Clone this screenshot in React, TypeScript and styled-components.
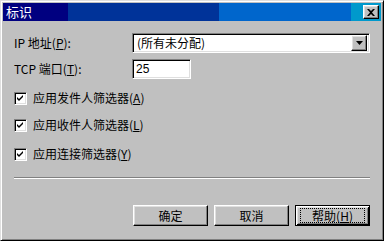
import React from 'react';
import styled, { createGlobalStyle, css } from 'styled-components';

const Global = createGlobalStyle`
  html, body {
    margin: 0;
    padding: 0;
    background: #c0c0c0;
  }
  body {
    font-family: "Noto Sans CJK SC", "DejaVu Sans", sans-serif;
    font-size: 12px;
    line-height: 14px;
    color: #000;
  }
`;

const raised = css`
  border-style: solid;
  border-width: 1px;
  border-color: #fff #000 #000 #fff;
  box-shadow: inset -1px -1px 0 #808080, inset 1px 1px 0 #dfdfdf;
`;

const sunken = css`
  border-style: solid;
  border-width: 1px;
  border-color: #808080 #fff #fff #808080;
  box-shadow: inset 1px 1px 0 #000, inset -1px -1px 0 #dfdfdf;
`;

const Window = styled.div`
  box-sizing: border-box;
  width: 384px;
  height: 241px;
  padding: 2px;
  background: #c0c0c0;
  border-style: solid;
  border-width: 1px;
  border-color: #dfdfdf #000 #000 #dfdfdf;
  box-shadow: inset 1px 1px 0 #fff, inset -1px -1px 0 #808080;
  display: flex;
  flex-direction: column;
  overflow: hidden;
`;

const TitleBar = styled.div`
  flex: none;
  height: 18px;
  display: flex;
  align-items: center;
  justify-content: space-between;
  padding: 0 2px 0 3px;
  background: linear-gradient(
    to right,
    #000080 0,
    #000080 65px,
    #003399 65px,
    #003399 216px,
    #0066cc 216px,
    #0066cc 348px,
    #0099cc 348px
  );
`;

const Title = styled.span`
  color: #fff;
  font-size: 13px;
  line-height: 16px;
`;

const CloseButton = styled.div`
  ${raised};
  box-sizing: border-box;
  width: 16px;
  height: 14px;
  background: #c0c0c0;
  display: flex;
  align-items: center;
  justify-content: center;
`;

const Body = styled.div`
  flex: 1;
  display: flex;
  flex-direction: column;
  padding: 12px 11px 0 11px;
`;

const FieldRow = styled.div<{ $gap: number }>`
  flex: none;
  height: 20px;
  display: flex;
  align-items: center;
  margin-bottom: ${p => p.$gap}px;
`;

const FieldLabel = styled.label`
  width: 118px;
  white-space: nowrap;
`;

const Combo = styled.div`
  ${sunken};
  box-sizing: border-box;
  width: 238px;
  height: 20px;
  background: #fff;
  display: flex;
  align-items: center;
  justify-content: space-between;
  padding: 0 2px 0 4px;
`;

const DropButton = styled.div`
  ${raised};
  box-sizing: border-box;
  width: 16px;
  height: 16px;
  background: #c0c0c0;
  display: flex;
  align-items: center;
  justify-content: center;
`;

const TextInput = styled.div`
  ${sunken};
  box-sizing: border-box;
  width: 59px;
  height: 20px;
  background: #fff;
  display: flex;
  align-items: center;
  padding-left: 3px;
  font-family: "Liberation Sans", sans-serif;
  font-size: 12px;
`;

const CheckRow = styled.label<{ $top: number }>`
  flex: none;
  height: 14px;
  display: flex;
  align-items: center;
  gap: 6px;
  margin-top: ${p => p.$top}px;
  white-space: nowrap;
`;

const Box = styled.span`
  ${sunken};
  box-sizing: border-box;
  width: 13px;
  height: 13px;
  background: #fff;
  display: flex;
  align-items: center;
  justify-content: center;
`;

const Separator = styled.div`
  flex: none;
  height: 0;
  border-top: 1px solid #808080;
  border-bottom: 1px solid #fff;
  margin: 16px 0 0 0;
`;

const ButtonRow = styled.div`
  flex: none;
  display: flex;
  justify-content: flex-end;
  gap: 6px;
  margin-top: 26px;
`;

const Button = styled.div<{ $default?: boolean }>`
  box-sizing: border-box;
  width: 75px;
  height: 21px;
  background: #c0c0c0;
  display: flex;
  align-items: center;
  justify-content: center;
  ${raised};
  ${p =>
    p.$default &&
    css`
      border: 1px solid #000;
      box-shadow: inset 1px 1px 0 #fff, inset -1px -1px 0 #000,
        inset 2px 2px 0 #dfdfdf, inset -2px -2px 0 #808080;
    `}
`;

const Focus = styled.span`
  box-sizing: border-box;
  width: 65px;
  height: 15px;
  border: 1px dotted #000;
  display: flex;
  align-items: center;
  justify-content: center;
`;

const Key = styled.span`
  text-decoration: underline;
`;

const Accel = ({ k }: { k: string }) => (
  <span>
    (<Key>{k}</Key>)
  </span>
);

const Check = () => (
  <Box>
    <svg width="7" height="7" viewBox="0 0 7 7">
      <path d="M0 2 L2 4 L6 0 L6 2 L2 6 L0 4 Z" fill="#000" />
    </svg>
  </Box>
);

export default function App() {
  return (
    <>
      <Global />
      <Window>
        <TitleBar>
          <Title>标识</Title>
          <CloseButton>
            <svg width="8" height="7" viewBox="0 0 8 7">
              <path
                d="M0 0h2l2 2 2-2h2L5 3.5 8 7H6L4 5 2 7H0l3-3.5z"
                fill="#000"
              />
            </svg>
          </CloseButton>
        </TitleBar>
        <Body>
          <FieldRow $gap={6}>
            <FieldLabel>
              IP 地址<Accel k="P" />:
            </FieldLabel>
            <Combo>
              <span>(所有未分配)</span>
              <DropButton>
                <svg width="7" height="4" viewBox="0 0 7 4">
                  <path d="M0 0h7L3.5 4z" fill="#000" />
                </svg>
              </DropButton>
            </Combo>
          </FieldRow>
          <FieldRow $gap={0}>
            <FieldLabel>
              TCP 端口<Accel k="T" />:
            </FieldLabel>
            <TextInput>25</TextInput>
          </FieldRow>
          <CheckRow $top={12}>
            <Check />
            <span>
              应用发件人筛选器<Accel k="A" />
            </span>
          </CheckRow>
          <CheckRow $top={13}>
            <Check />
            <span>
              应用收件人筛选器<Accel k="L" />
            </span>
          </CheckRow>
          <CheckRow $top={15}>
            <Check />
            <span>
              应用连接筛选器<Accel k="Y" />
            </span>
          </CheckRow>
          <Separator />
          <ButtonRow>
            <Button>确定</Button>
            <Button>取消</Button>
            <Button $default>
              <Focus>
                帮助<Accel k="H" />
              </Focus>
            </Button>
          </ButtonRow>
        </Body>
      </Window>
    </>
  );
}
